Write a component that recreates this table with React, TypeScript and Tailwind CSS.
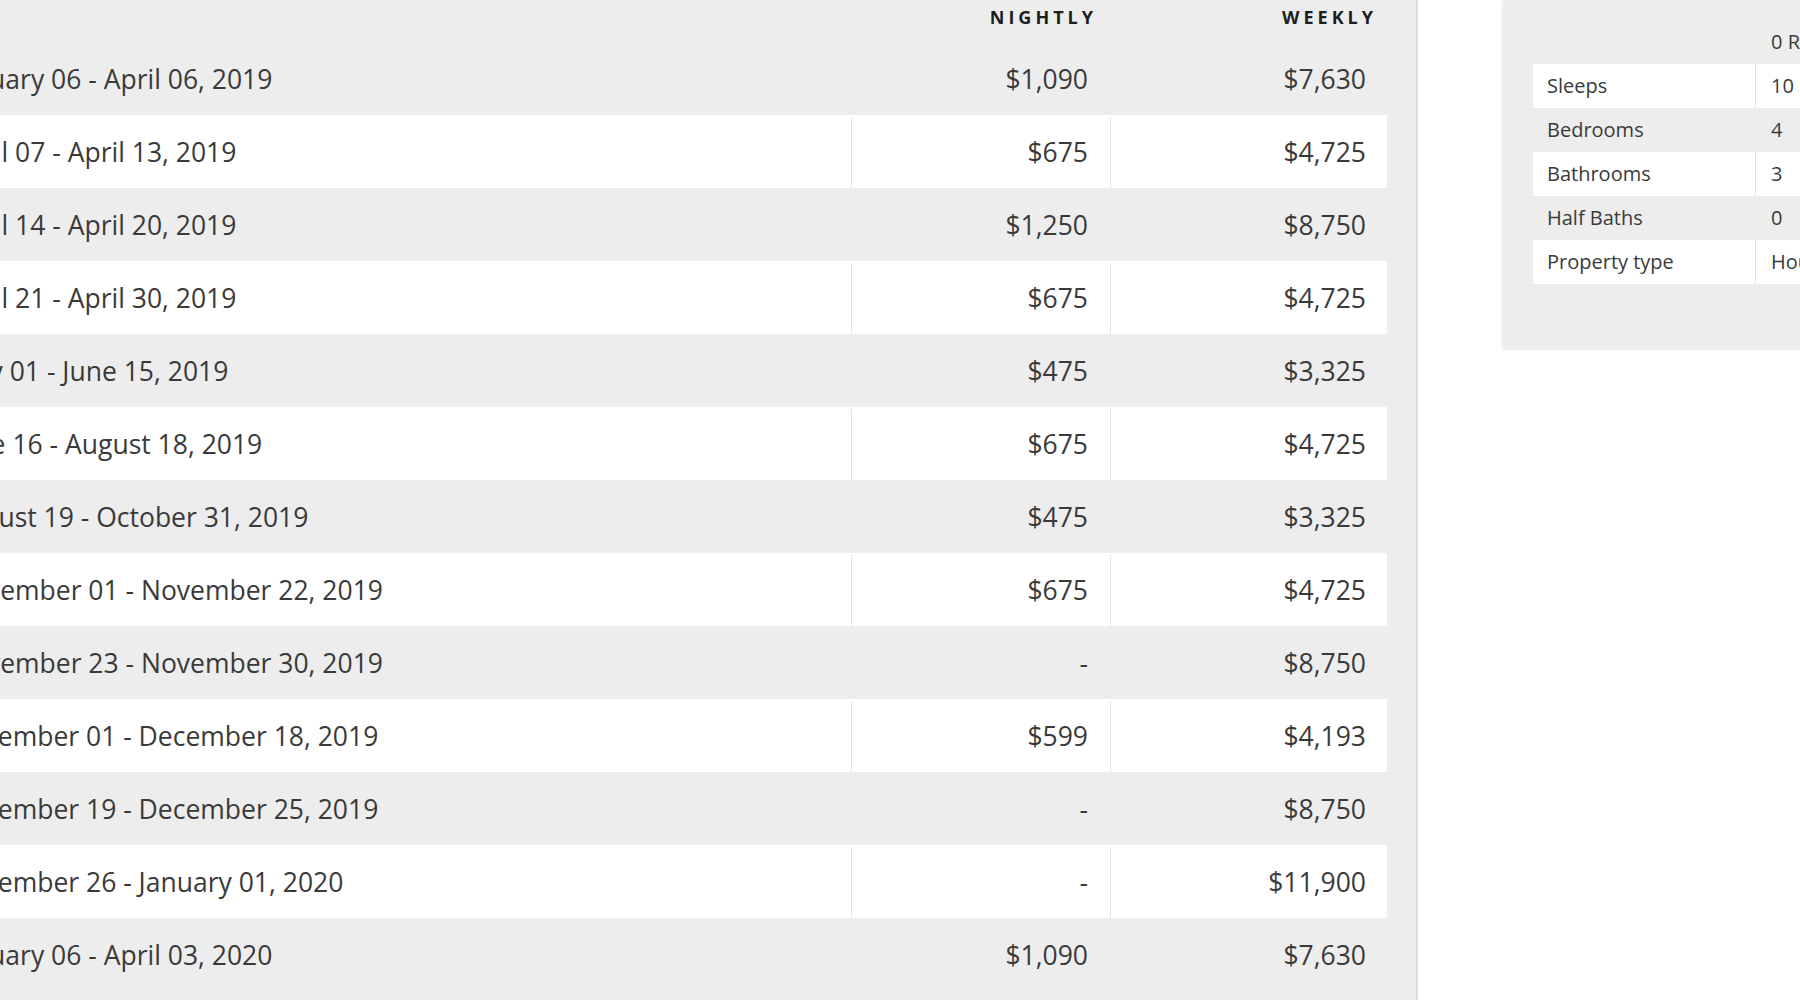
import React from "react";

const rows: [string, string, string][] = [
  ["January 06 - April 06, 2019", "$1,090", "$7,630"],
  ["April 07 - April 13, 2019", "$675", "$4,725"],
  ["April 14 - April 20, 2019", "$1,250", "$8,750"],
  ["April 21 - April 30, 2019", "$675", "$4,725"],
  ["May 01 - June 15, 2019", "$475", "$3,325"],
  ["June 16 - August 18, 2019", "$675", "$4,725"],
  ["August 19 - October 31, 2019", "$475", "$3,325"],
  ["November 01 - November 22, 2019", "$675", "$4,725"],
  ["November 23 - November 30, 2019", "-", "$8,750"],
  ["December 01 - December 18, 2019", "$599", "$4,193"],
  ["December 19 - December 25, 2019", "-", "$8,750"],
  ["December 26 - January 01, 2020", "-", "$11,900"],
  ["January 06 - April 03, 2020", "$1,090", "$7,630"],
];

const specs: [string, string][] = [
  ["Sleeps", "10"],
  ["Bedrooms", "4"],
  ["Bathrooms", "3"],
  ["Half Baths", "0"],
  ["Property type", "House"],
];

export default function App() {
  return (
    <div className="w-[1800px] h-[1000px] overflow-hidden bg-white flex items-start font-['Open_Sans',sans-serif] text-[#3a3a3a]">
      {/* Left rates panel */}
      <div className="ml-[-100px] w-[1518px] h-[1000px] shrink-0 bg-[#ededed] border-r-2 border-[#dedede] pr-[29px]">
        <div className="flex h-[42px] items-center pb-[7px]">
          <div className="flex-1" />
          <div className="w-[259px] text-right pr-[13px] text-[18px] font-bold tracking-[4px] text-[#1e1e1e]">NIGHTLY</div>
          <div className="w-[277px] text-right pr-[10px] text-[18px] font-bold tracking-[4px] text-[#1e1e1e]">WEEKLY</div>
        </div>
        {rows.map((r, i) => {
          const white = i % 2 === 1;
          return (
            <div
              key={i}
              className={`flex h-[73px] items-center pt-[2px] text-[26.5px] ${white ? "bg-white" : "bg-[#ededed]"}`}
            >
              <div className="flex-1 pl-[51px] h-full flex items-center whitespace-nowrap">{r[0]}</div>
              <div
                className={`w-[259px] h-full flex items-center justify-end pr-[22px] border-l ${white ? "border-[#e4e4e4]" : "border-[#ededed]"}`}
              >
                {r[1]}
              </div>
              <div
                className={`w-[277px] h-full flex items-center justify-end pr-[21px] border-l ${white ? "border-[#e4e4e4]" : "border-[#ededed]"}`}
              >
                {r[2]}
              </div>
            </div>
          );
        })}
      </div>

      {/* Right details box */}
      <div className="ml-[85px] w-[420px] h-[349px] shrink-0 bg-[#ededed] shadow-[0_0_3px_rgba(0,0,0,0.15)] pt-[20px] pl-[30px] text-[20px] text-[#3a3a3a]">
        <div className="flex h-[44px] items-center">
          <div className="w-[222px]" />
          <div className="pl-[16px] whitespace-nowrap">0 Reviews</div>
        </div>
        {specs.map((s, i) => {
          const white = i % 2 === 0;
          return (
            <div key={i} className={`flex h-[44px] items-center ${white ? "bg-white" : "bg-[#ededed]"}`}>
              <div className="w-[222px] pl-[14px] whitespace-nowrap">{s[0]}</div>
              <div
                className={`flex-1 h-full flex items-center pl-[15px] border-l whitespace-nowrap ${white ? "border-[#e4e4e4]" : "border-[#ededed]"}`}
              >
                {s[1]}
              </div>
            </div>
          );
        })}
      </div>
    </div>
  );
}
